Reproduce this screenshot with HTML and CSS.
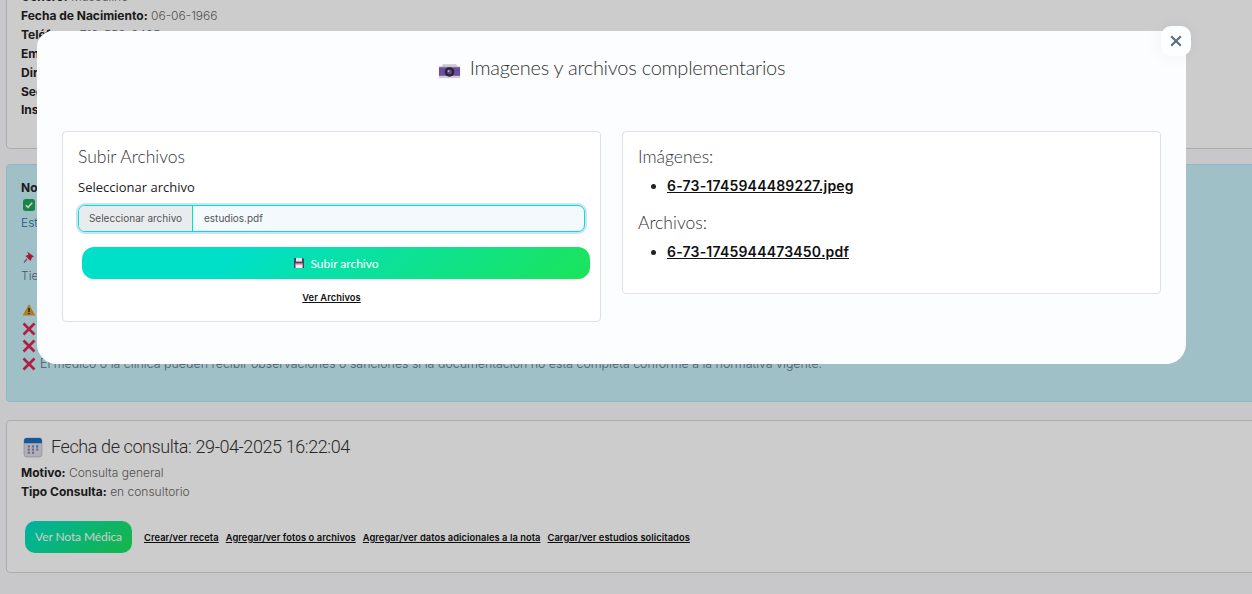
FILE: index.html
```html
<!DOCTYPE html>
<html lang="es">
<head>
<meta charset="utf-8">
<title>Imagenes y archivos complementarios</title>
<link rel="stylesheet" href="styles.css">
</head>
<body>
<main class="page">
  <section class="card patient">
    <p><b>Género:</b> Masculino</p>
    <p><b>Fecha de Nacimiento:</b> 06-06-1966</p>
    <p><b>Teléfono:</b> 712-553-0405</p>
    <p><b>Email:</b> correo</p>
    <p><b>Dirección:</b> domicilio</p>
    <p><b>Seguro:</b> ninguno</p>
    <p><b>Institución:</b> ninguna</p>
  </section>
  <section class="notice">
    <p><b>Nota importante</b></p>
    <p><svg class="ico" viewBox="0 0 14 14"><rect x="1" y="1" width="12" height="12" rx="2.5" fill="#1fa855"/><path d="M3.8 7.2l2.2 2.2 4.2-4.6" fill="none" stroke="#fff" stroke-width="1.6"/></svg></p>
    <p class="info">Estado</p>
    <p class="gap"><svg class="ico" viewBox="0 0 14 14"><path d="M5 1.5l7 5-2 1-1.5 3.5-5-5 3-1.5z" fill="#d8203f"/><path d="M5 9l-3 3.5" stroke="#777" stroke-width="1.2"/></svg></p>
    <p>Tiene</p>
    <p class="gap"><svg class="ico" viewBox="0 0 14 14"><path d="M7 1.2L13.4 12.6H.6z" fill="#d99a2b"/><path d="M7 5v4M7 10v1.3" stroke="#3a2b14" stroke-width="1.5"/></svg></p>
    <p class="cross"><svg class="ico" viewBox="0 0 14 14"><path d="M1.5 1.5l11 11M12.5 1.5l-11 11" stroke="#e0244f" stroke-width="2.6"/></svg>Sin documentación</p>
    <p class="cross"><svg class="ico" viewBox="0 0 14 14"><path d="M1.5 1.5l11 11M12.5 1.5l-11 11" stroke="#e0244f" stroke-width="2.6"/></svg>Sin respaldo</p>
    <p class="cross"><svg class="ico" viewBox="0 0 14 14"><path d="M1.5 1.5l11 11M12.5 1.5l-11 11" stroke="#e0244f" stroke-width="2.6"/></svg>El médico o la clínica pueden recibir observaciones o sanciones si la documentación no está completa conforme a la normativa vigente.</p>
  </section>
  <section class="card consult">
    <h2 class="consult-title">
      <svg class="cal" viewBox="0 0 18 20"><rect x=".5" y="1" width="17" height="18" rx="2.5" fill="#dcdce6" stroke="#a9a9b5" stroke-width=".6"/><path d="M.5 6V3.5A2.5 2.5 0 0 1 3 1h12a2.5 2.5 0 0 1 2.5 2.5V6z" fill="#1a6fc0"/><g fill="#8b7fa8"><rect x="4" y="8" width="2" height="2"/><rect x="8" y="8" width="2" height="2"/><rect x="12" y="8" width="2" height="2" fill="#3b86d0"/><rect x="4" y="11" width="2" height="2"/><rect x="8" y="11" width="2" height="2"/><rect x="12" y="11" width="2" height="2"/><rect x="4" y="14" width="2" height="2"/><rect x="8" y="14" width="2" height="2"/></g></svg>
      Fecha de consulta: 29-04-2025 16:22:04
    </h2>
    <p><b>Motivo:</b> Consulta general</p>
    <p><b>Tipo Consulta:</b> en consultorio</p>
    <div class="actions">
      <a class="btn-note" href="#">Ver Nota Médica</a>
      <a class="mini" href="#">Crear/ver receta</a>
      <a class="mini" href="#">Agregar/ver fotos o archivos</a>
      <a class="mini" href="#">Agregar/ver datos adicionales a la nota</a>
      <a class="mini" href="#">Cargar/ver estudios solicitados</a>
    </div>
  </section>
</main>
<div class="backdrop"></div>
<div class="modal">
  <button class="close" aria-label="Cerrar"><svg viewBox="0 0 12 12" width="12" height="12"><path d="M1.2 1.2l9.6 9.6M10.8 1.2l-9.6 9.6" stroke="#5f6f80" stroke-width="2.2"/></svg></button>
  <h1 class="modal-title">
    <svg class="cam" viewBox="0 0 24 16"><path d="M1 3h3l1-2h14l1 2h3v1H1z" fill="#c9c7cc"/><rect x="1" y="4" width="22" height="11" fill="#6b4f9c"/><rect x="1" y="13" width="22" height="2.5" fill="#cfcbd8"/><circle cx="12" cy="9" r="5" fill="#2b2138"/><circle cx="12" cy="9" r="2.6" fill="#5b4a80"/><circle cx="11" cy="8" r=".9" fill="#d8d0f0"/></svg>
    Imagenes y archivos complementarios
  </h1>
  <div class="panels">
    <section class="panel upload">
      <h3 class="panel-title">Subir Archivos</h3>
      <label class="field-label" for="f">Seleccionar archivo</label>
      <div class="file-input" id="f">
        <span class="file-btn">Seleccionar archivo</span>
        <span class="file-name">estudios.pdf</span>
      </div>
      <button class="btn-upload">
        <svg class="disk" viewBox="0 0 12 12"><path d="M1 1h9l1 1v9H1z" fill="#4b3f63"/><rect x="3" y="1" width="6" height="3.6" fill="#e4e2ea"/><rect x="2.5" y="6.5" width="7" height="4.5" fill="#f4f1f4"/><rect x="2.5" y="6.5" width="7" height="1" fill="#e25a6e"/></svg>
        Subir archivo
      </button>
      <a class="see-files" href="#">Ver Archivos</a>
    </section>
    <section class="panel files">
      <h3 class="list-title">Imágenes:</h3>
      <ul class="file-list"><li><a href="#">6-73-1745944489227.jpeg</a></li></ul>
      <h3 class="list-title second">Archivos:</h3>
      <ul class="file-list"><li><a href="#">6-73-1745944473450.pdf</a></li></ul>
    </section>
  </div>
</div>
</body>
</html>
```
FILE: styles.css
```css
* { box-sizing: border-box; }
html, body { margin: 0; height: 100%; overflow: hidden; }
body {
  background: #fafafd;
  font-family: Inter, "Liberation Sans", sans-serif;
  font-size: 12px;
  font-weight: 300;
  color: #666;
}
p { margin: 0; }
b { color: #222; font-weight: 700; }
.page {
  margin: -12px -4px 0 6px;
  display: flex;
  flex-direction: column;
}
.card {
  background: #fff;
  border: 1px solid #d8d8d8;
  border-radius: 4px;
}
.patient {
  height: 161px;
  padding: 0 14px;
  line-height: 18.9px;
}
.patient p:first-child { margin-top: -1px; }
.notice {
  margin-top: 15px;
  height: 238px;
  padding: 14px 14px 0;
  background: #c9f0f9;
  border: 1px solid #b5e6f2;
  border-radius: 4px;
  line-height: 17.6px;
  color: #5d7488;
}
.notice .gap { margin-top: 17.6px; }
.notice .info { color: #2c6fa8; }
.ico { width: 14px; height: 14px; margin-left: 1px; vertical-align: -2px; display: inline-block; }
.cross { display: flex; align-items: center; gap: 4px; white-space: nowrap; font-size: 12.4px; }
.cross .ico { flex: none; }
.consult {
  margin-top: 18px;
  height: 153px;
  padding: 14px 14px 0;
  line-height: 19px;
}
.consult-title {
  margin: 0 0 4px;
  font: 300 18px/24px Roboto, sans-serif;
  letter-spacing: -.4px;
  color: #333;
  display: flex;
  align-items: center;
  gap: 8px;
}
.cal { width: 20px; height: 21px; margin-left: 2px; flex: none; }
.actions {
  margin: 20px 0 0 4px;
  display: flex;
  align-items: center;
  gap: 7px;
}
.btn-note {
  width: 107px;
  height: 32px;
  margin-right: 5px;
  border-radius: 10px;
  background: linear-gradient(135deg, #00dfc8, #1be45a);
  color: #fff;
  font: 400 12px/32px Lato, sans-serif;
  letter-spacing: -.1px;
  text-align: center;
  text-decoration: none;
}
.mini, .see-files {
  font-size: 9.3px;
  font-weight: 600;
  color: #111;
  text-decoration: underline;
  letter-spacing: .07px;
}
.backdrop {
  position: fixed;
  inset: 0;
  background: rgba(0, 0, 0, .2);
}
.modal {
  position: fixed;
  left: 37px;
  top: 31px;
  width: 1149px;
  height: 333px;
  padding: 0 25px;
  background: #fcfdff;
  border-radius: 16px 16px 20px 20px;
}
.close {
  position: absolute;
  top: -5px;
  right: -5px;
  width: 30px;
  height: 30px;
  padding: 0;
  border: 0;
  border-radius: 10px;
  background: #fdfeff;
  box-shadow: 0 0 20px rgba(0, 0, 0, .06);
  display: flex;
  align-items: center;
  justify-content: center;
}
.modal-title {
  margin: 0;
  height: 100px;
  padding-top: 21px;
  font: 300 20px/30px Lato, sans-serif;
  letter-spacing: -.26px;
  color: #333;
  display: flex;
  justify-content: center;
  gap: 9px;
  align-items: flex-start;
}
.cam { width: 23px; height: 16px; margin-top: 11px; }
.panels {
  display: grid;
  grid-template-columns: 539px 539px;
  gap: 21px;
  align-items: start;
}
.panel {
  background: #fff;
  border: 1px solid #dfe1e4;
  border-radius: 4px;
  padding: 0 15px;
}
.upload { height: 191px; display: flex; flex-direction: column; }
.files { height: 163px; }
.panel-title {
  margin: 13px 0 0;
  font: 300 17.5px/24px Lato, sans-serif;
  color: #333;
}
.field-label {
  margin-top: 9px;
  font: 400 13px/18px "Open Sans", sans-serif;
  color: #222;
}
.file-input {
  margin-top: 9px;
  width: 507px;
  height: 27px;
  display: flex;
  border: 1px solid #00e4c4;
  border-radius: 7px;
  background: #f4f9fe;
  box-shadow: 0 0 0 2px #cfe0fb;
  font-size: 10px;
  font-weight: 400;
  line-height: 25px;
  overflow: hidden;
  color: #555;
}
.file-btn {
  width: 114px;
  background: #e9ecef;
  border-right: 1px solid #00e4c4;
  text-align: center;
  flex: none;
}
.file-name { padding-left: 11px; }
.btn-upload {
  margin: 15px 0 0 4px;
  width: 508px;
  height: 32px;
  flex: none;
  border: 0;
  border-radius: 12px;
  background: linear-gradient(135deg, #00dfc8 30%, #1be45a 100%);
  color: #fff;
  font: 400 12px Lato, sans-serif;
  display: flex;
  align-items: center;
  justify-content: center;
  gap: 5px;
}
.disk { width: 12px; height: 12px; }
.see-files { align-self: center; margin-top: 13px; }
.list-title {
  margin: 13px 0 0;
  font: 300 17.5px/24px Lato, sans-serif;
  color: #333;
}
.list-title.second { margin-top: 15px; }
.file-list {
  margin: 7px 0 0;
  padding-left: 29px;
  font-size: 14px;
  font-weight: 600;
  letter-spacing: .2px;
  line-height: 20px;
  color: #222;
}
.file-list a { color: #111; }
```
